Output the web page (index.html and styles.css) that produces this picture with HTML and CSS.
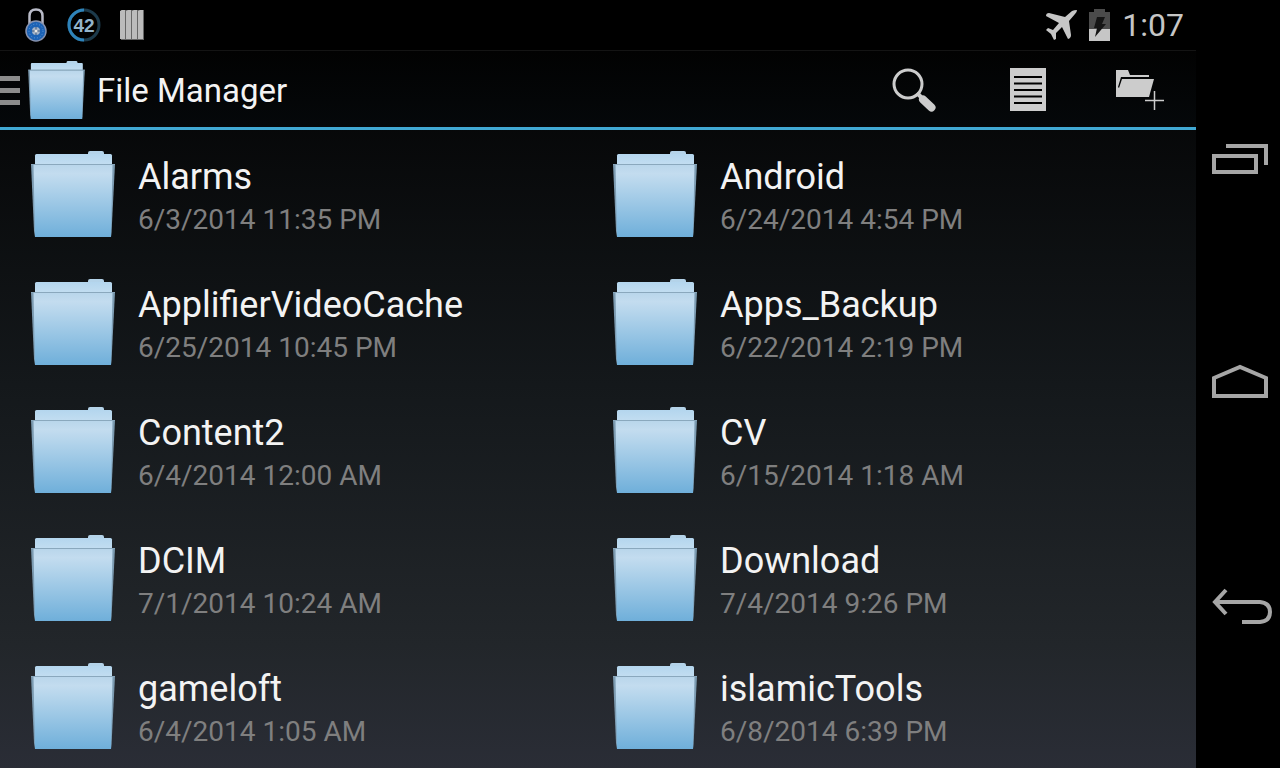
FILE: index.html
```html
<!DOCTYPE html>
<html lang="en">
<head>
<meta charset="utf-8">
<title>File Manager</title>
<link rel="stylesheet" href="styles.css">
</head>
<body>
<svg class="defs" width="0" height="0" aria-hidden="true">
  <defs>
    <linearGradient id="front" x1="0" y1="0" x2="0" y2="1">
      <stop offset="0" stop-color="#b9d6eb"/>
      <stop offset="0.12" stop-color="#c3dcef"/>
      <stop offset="0.25" stop-color="#b7d6ec"/>
      <stop offset="1" stop-color="#6fafda"/>
    </linearGradient>
    <linearGradient id="back" x1="0" y1="0" x2="0" y2="1">
      <stop offset="0" stop-color="#b4d6ee"/>
      <stop offset="1" stop-color="#c9e1f2"/>
    </linearGradient>
    <symbol id="folder" viewBox="0 0 84 86">
      <path fill="#b4d3e9" d="M57 4V2q0-2 2-2h12q2 0 2 2v2z"/>
      <rect x="4" y="3" width="77" height="16" rx="1.5" fill="url(#back)"/>
      <path fill="#7c9bb1" d="M0 13h84L80.500 82 80 86H4L3 80z"/>
      <path fill="url(#front)" d="M2.500 14h79L80 86H4z"/>
      <path fill="none" stroke="#8aa8bd" d="M0 13.500h84"/>
    </symbol>
  </defs>
</svg>
<div class="screen">
  <div class="app">
    <div class="status">
      <div class="notices">
        <svg width="24" height="36" viewBox="0 0 24 36" aria-hidden="true">
          <path d="M5.500 17V9q0-6.500 6.500-6.500T18.500 9v8" fill="none" stroke="#b9bbc8" stroke-width="2.500"/>
          <circle cx="12" cy="24" r="10" fill="#1c62b5" stroke="#8793b0" stroke-width="1.500"/>
          <circle cx="12" cy="24" r="7" fill="none" stroke="#5c9adf" stroke-width="1" stroke-dasharray="1 2"/>
          <circle cx="12" cy="24" r="4" fill="#a4b4c8"/>
          <path d="M12 20v8M8 24h8" stroke="#39557c"/><circle cx="12" cy="24" r="1.500" fill="#eceae4"/>
        </svg>
        <svg width="36" height="36" viewBox="0 0 36 36" role="img" aria-label="42">
          <circle cx="18" cy="18" r="15" fill="none" stroke="#1c3a4b" stroke-width="3"/>
          <path d="M18 33A15 15 0 0 1 18 3" fill="none" stroke="#2e83ba" stroke-width="3"/>
          <text class="count" x="18" y="25" text-anchor="middle">42</text>
        </svg>
        <svg class="bars" width="24" height="32" viewBox="0 0 24 32" aria-hidden="true">
          <path fill="#666" d="M1 1h23v30H1z"/>
          <path fill="#bbb" d="M0 2l2-1h3v29H0zM6 2l2-1h3v29H6zM12 2l2-1h3v29h-5zM18 2l2-1h3v29h-5z"/>
        </svg>
      </div>
      <div class="system">
        <svg width="32" height="32" viewBox="0 0 32 32" aria-hidden="true">
          <path fill="#c6c6c6" d="M32 1q-3 0-5 1l-7 6L4 4Q1 4 1 7l13 7-6 7-5-2-2 2 5 4 3 6 2-1v-6l6-6 6 12q3-1 3-4l-2-14 6-7q2-2 2-4z"/>
        </svg>
        <svg width="21" height="32" viewBox="0 0 21 32" aria-hidden="true">
          <path fill="#4b4b4b" d="M0 3h5V0h11v3h5v17H0z"/>
          <path fill="#c6c6c6" d="M0 20h21v12H0z"/>
          <path fill="#151515" d="M8 8h8l-3 7h4L6 28l2-9H5z"/>
        </svg>
        <time>1:07</time>
      </div>
    </div>
    <header class="bar">
      <button class="drawer" aria-label="Open drawer">
        <svg width="20" height="29" viewBox="0 0 20 29"><path fill="#8c8c8c" d="M0 0h20v5H0zM0 12h20v5H0zM0 24h20v5H0z"/></svg>
      </button>
      <svg class="logo" aria-hidden="true"><use href="#folder"/></svg>
      <h1>File Manager</h1>
      <div class="actions">
        <button aria-label="Search">
          <svg width="48" height="48" viewBox="0 0 48 48">
            <circle cx="16" cy="18" r="14" fill="none" stroke="#ccc" stroke-width="3"/>
            <path d="M25 27l5 5" stroke="#ccc" stroke-width="4"/>
            <path d="M31 33.500l8.500 8" stroke="#ccc" stroke-width="8" stroke-linecap="round"/>
          </svg>
        </button>
        <button aria-label="Details">
          <svg width="48" height="48" viewBox="0 0 48 48">
            <path fill="#ccc" d="M6 2h36v43H6z"/>
            <path d="M10 11h28M10 17.500h28M10 24h28M10 30.500h28M10 37h28" stroke="#000" stroke-width="2"/>
          </svg>
        </button>
        <button aria-label="New folder">
          <svg width="48" height="48" viewBox="0 0 48 48">
            <path fill="#ccc" d="M0 4h12l2 5h19v2H5L2 21l1 1 3-9h32l-5 18H0z"/>
            <path d="M38.500 25v19M29 34.500h19" stroke="#ccc" stroke-width="1.500"/>
          </svg>
        </button>
      </div>
    </header>
    <main>
      <ul class="files">
        <li><a href="#alarms"><svg class="icon" aria-hidden="true"><use href="#folder"/></svg><span class="info"><span class="name">Alarms</span><span class="date">6/3/2014 11:35 PM</span></span></a></li>
        <li><a href="#android"><svg class="icon" aria-hidden="true"><use href="#folder"/></svg><span class="info"><span class="name">Android</span><span class="date">6/24/2014 4:54 PM</span></span></a></li>
        <li><a href="#applifier"><svg class="icon" aria-hidden="true"><use href="#folder"/></svg><span class="info"><span class="name">ApplifierVideoCache</span><span class="date">6/25/2014 10:45 PM</span></span></a></li>
        <li><a href="#backup"><svg class="icon" aria-hidden="true"><use href="#folder"/></svg><span class="info"><span class="name">Apps_Backup</span><span class="date">6/22/2014 2:19 PM</span></span></a></li>
        <li><a href="#content2"><svg class="icon" aria-hidden="true"><use href="#folder"/></svg><span class="info"><span class="name">Content2</span><span class="date">6/4/2014 12:00 AM</span></span></a></li>
        <li><a href="#cv"><svg class="icon" aria-hidden="true"><use href="#folder"/></svg><span class="info"><span class="name">CV</span><span class="date">6/15/2014 1:18 AM</span></span></a></li>
        <li><a href="#dcim"><svg class="icon" aria-hidden="true"><use href="#folder"/></svg><span class="info"><span class="name">DCIM</span><span class="date">7/1/2014 10:24 AM</span></span></a></li>
        <li><a href="#download"><svg class="icon" aria-hidden="true"><use href="#folder"/></svg><span class="info"><span class="name">Download</span><span class="date">7/4/2014 9:26 PM</span></span></a></li>
        <li><a href="#gameloft"><svg class="icon" aria-hidden="true"><use href="#folder"/></svg><span class="info"><span class="name">gameloft</span><span class="date">6/4/2014 1:05 AM</span></span></a></li>
        <li><a href="#islamictools"><svg class="icon" aria-hidden="true"><use href="#folder"/></svg><span class="info"><span class="name">islamicTools</span><span class="date">6/8/2014 6:39 PM</span></span></a></li>
      </ul>
    </main>
  </div>
  <nav class="nav" aria-label="System">
    <button aria-label="Recent apps">
      <svg width="64" height="40" viewBox="0 0 64 40"><path d="M4 16h42v16H4zM16 6h40v19" fill="none" stroke="#a6a6a6" stroke-width="4"/></svg>
    </button>
    <button aria-label="Home">
      <svg width="64" height="40" viewBox="0 0 64 40"><path d="M4 32V14L30 3l26 11v18z" fill="none" stroke="#a6a6a6" stroke-width="4"/></svg>
    </button>
    <button aria-label="Back">
      <svg width="64" height="40" viewBox="0 0 64 40"><path d="M4 14h46q10 1 10 10T50 34H32" fill="none" stroke="#a6a6a6" stroke-width="4"/><path d="M16 2L5 14l11 12" fill="none" stroke="#a6a6a6" stroke-width="4"/></svg>
    </button>
  </nav>
</div>
</body>
</html>
```
FILE: styles.css
```css
* { box-sizing: border-box; }
body {
  margin: 0;
  background: #000;
  color: #f3f3f3;
  font-family: Roboto, sans-serif;
}
.defs { position: absolute; }
svg { display: block; flex: none; }
button {
  display: flex;
  align-items: center;
  justify-content: center;
  margin: 0;
  padding: 0;
  border: 0;
  background: none;
  cursor: pointer;
}
.screen {
  display: grid;
  grid-template-columns: minmax(0, 1fr) 84px;
  height: 100vh;
}
.app {
  display: flex;
  flex-direction: column;
  min-height: 0;
  background: linear-gradient(#000, #14181b 50%, #22262a 84%, #2a2d36);
}
.status {
  display: flex;
  align-items: center;
  justify-content: space-between;
  height: 50px;
  padding: 0 12px 0 24px;
  background: #000;
}
.notices, .system { display: flex; align-items: center; }
.notices { gap: 18px; }
.count {
  font: bold 19px "Liberation Sans", sans-serif;
  fill: #93b4cb;
}
.system { gap: 12px; color: #c6c6c6; font-size: 32px; }
.bar {
  display: flex;
  align-items: center;
  height: 80px;
  padding-top: 2px;
  border-top: 1px solid #141414;
  border-bottom: 3px solid #41a9d4;
  background: linear-gradient(#020202, #05080a);
}
.logo { width: 57px; height: 58px; margin: 0 12px 0 8px; }
h1 { margin: 0; font-size: 33px; font-weight: 400; }
.actions { display: flex; margin-left: auto; }
.actions button { width: 112px; height: 74px; }
main { flex: 1; min-height: 0; overflow: hidden; }
.files {
  display: grid;
  grid-template-columns: 1fr 1fr;
  margin: 0;
  padding: 0 16px;
  list-style: none;
}
.files a {
  display: flex;
  align-items: center;
  gap: 23px;
  height: 128px;
  padding: 0 15px;
  color: inherit;
  text-decoration: none;
}
.icon { width: 84px; height: 86px; }
.info { display: flex; flex-direction: column; padding-top: 8px; }
.name { font-size: 36px; line-height: 44px; }
.date { font-size: 28px; line-height: 42px; color: #7f7f7f; }
.nav {
  display: flex;
  flex-direction: column;
  justify-content: space-around;
  padding: 48px 0;
}
.nav button { height: 80px; padding: 0 6px 0 14px; }
```
